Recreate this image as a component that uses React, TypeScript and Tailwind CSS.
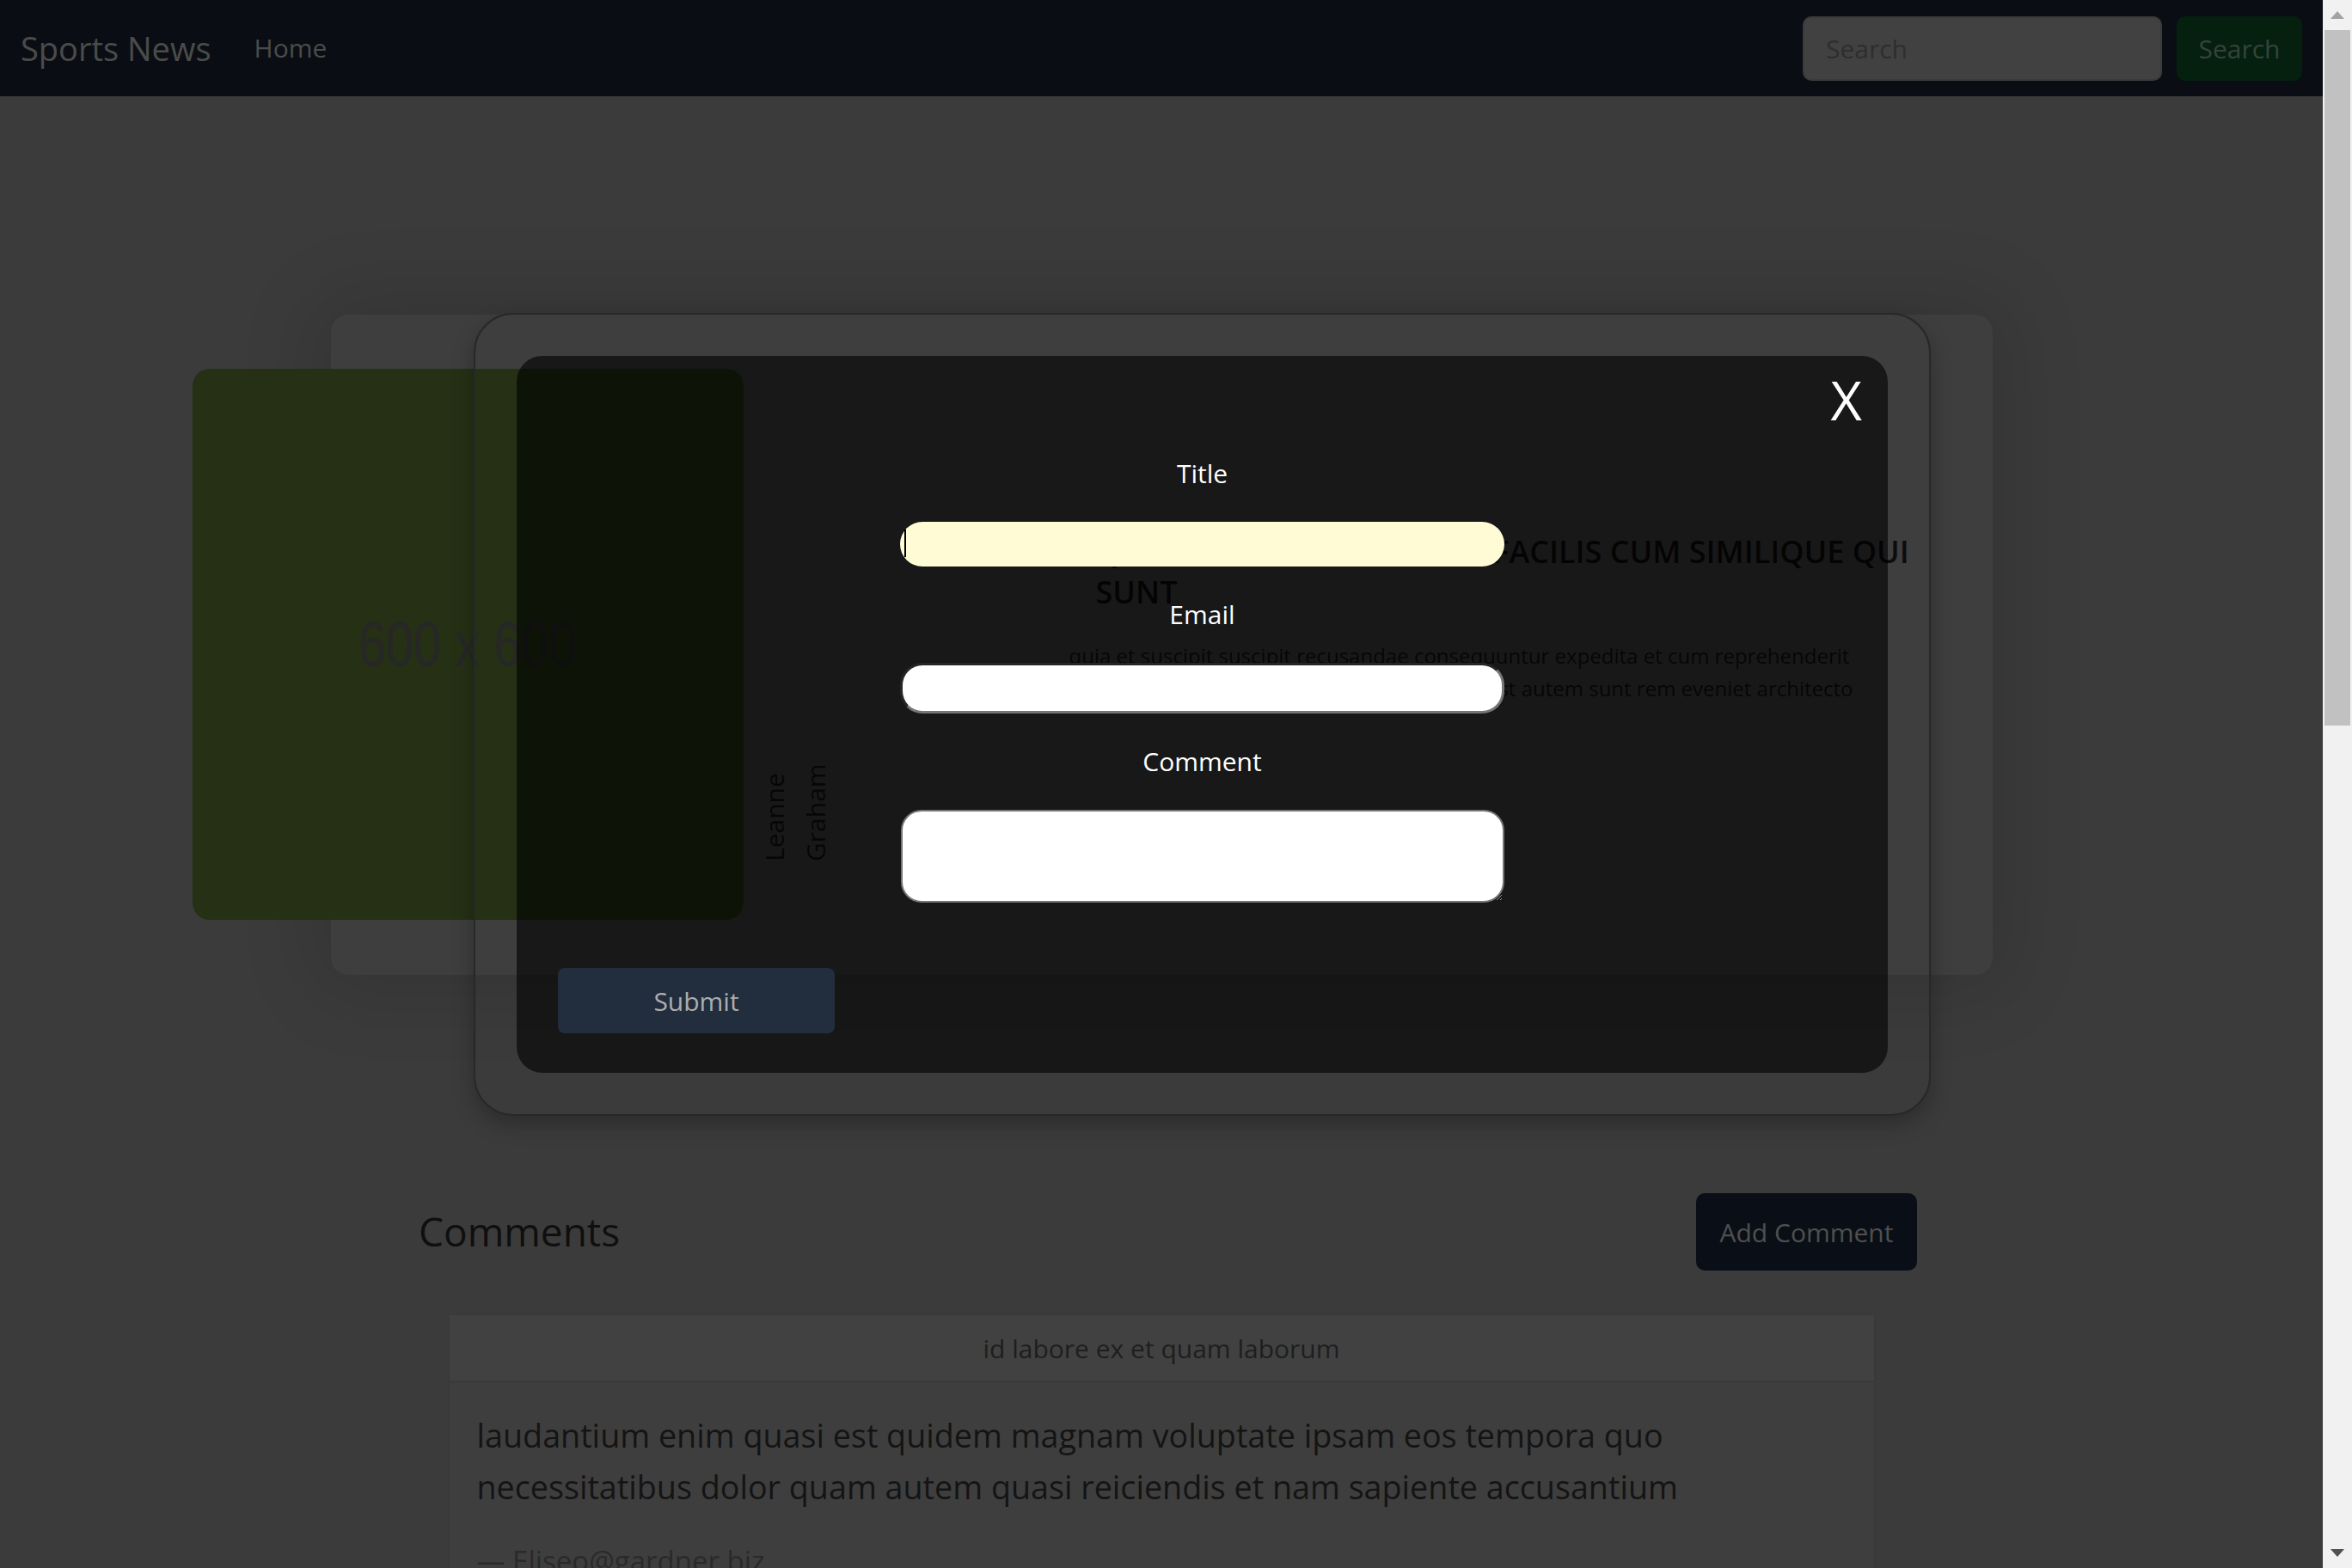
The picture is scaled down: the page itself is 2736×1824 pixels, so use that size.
import { useState } from 'react'

const COMMENT = {
  name: 'id labore ex et quam laborum',
  email: 'Eliseo@gardner.biz',
  body: 'laudantium enim quasi est quidem magnam voluptate ipsam eos tempora quo necessitatibus dolor quam autem quasi reiciendis et nam sapiente accusantium',
}

function Navbar() {
  return (
    <nav className="flex h-[112px] items-center bg-[#0a0e14] px-[24px]">
      <a href="#" className="text-[38px] leading-[56px] text-[#4b4b4b]">
        Sports News
      </a>
      <a href="#" className="ml-[50px] text-[30px] leading-[48px] text-[#4b4b4b]">
        Home
      </a>
      <form className="ml-auto flex gap-[17px]" onSubmit={(e) => e.preventDefault()}>
        <input
          placeholder="Search"
          className="h-[75px] w-[418px] rounded-[10px] border-2 border-[#3a3a3a] bg-[#414141] px-[25px] text-[30px] text-[#2e2e2e] outline-none placeholder:text-[#2e2e2e]"
        />
        <button className="h-[75px] w-[146px] rounded-[10px] bg-[#05200f] text-[30px] text-[#34443a]">
          Search
        </button>
      </form>
    </nav>
  )
}

function ArticleCard() {
  return (
    <section className="mx-auto mt-[254px] flex h-[768px] w-[1933px] rounded-[20px] bg-[#3e3e3e] shadow-[0_0_90px_20px_rgba(0,0,0,0.12)]">
      <div className="-ml-[161px] mt-[63px] flex h-[641px] w-[641px] shrink-0 items-center justify-center rounded-[20px] bg-[#253015]">
        <span className="scale-x-[0.77] font-['Liberation_Sans',sans-serif] text-[75px] text-[#272727]">
          600 x 600
        </span>
      </div>

      <div className="ml-[12px] mt-[516px] h-[120px] rotate-180 text-[30px] leading-[48px] text-[#111111] [writing-mode:vertical-rl]">
        Leanne Graham
      </div>

      <div className="ml-[271px] mt-[252px] flex flex-col">
        <h5 className="ml-[31px] whitespace-nowrap text-[36px] font-semibold uppercase leading-[47px] text-[#0c0c0c]">
          qui est eum et magnam facilis cum similique qui
          <br />
          sunt
        </h5>
        <p className="mt-[32px] whitespace-nowrap text-[24px] leading-[38px] text-[#101010]">
          quia et suscipit suscipit recusandae consequuntur expedita et cum reprehenderit
          <br />
          molestiae ut ut quas totam nostrum rerum est autem sunt rem eveniet architecto
        </p>
      </div>
    </section>
  )
}

function Comments() {
  return (
    <>
      <div className="ml-[487px] mt-[254px] flex h-[90px] w-[1743px] items-center justify-between">
        <h4 className="text-[46px] font-medium leading-[1.2] text-[#0f0f0f]">Comments</h4>
        <button className="h-[90px] w-[257px] rounded-[10px] bg-[#0a0f17] text-[30px] text-[#4f4f4f]">
          Add Comment
        </button>
      </div>

      <div className="mx-auto mt-[50px] w-[1661px] rounded-[12px] border-2 border-[#393939] bg-[#3e3e3e]">
        <div className="flex h-[78px] items-center justify-center border-b-2 border-[#393939] bg-[#414141] text-[30px] text-[#1e1e1e]">
          {COMMENT.name}
        </div>
        <div className="p-[32px]">
          <blockquote>
            <p className="text-[37.7px] leading-[60px] text-[#141414]">{COMMENT.body}</p>
            <footer className="mt-[32px] text-[33px] leading-[48px] text-[#2a2a2a]">
              — {COMMENT.email}
            </footer>
          </blockquote>
        </div>
      </div>
    </>
  )
}

function CommentModal() {
  const [title, setTitle] = useState('')
  const [email, setEmail] = useState('')
  const [comment, setComment] = useState('')

  return (
    <div className="absolute left-[551px] top-[364px] h-[934px] w-[1695px] rounded-[46px] border-2 border-[#282828] p-[48px] shadow-[0_10px_24px_rgba(0,0,0,0.25)]">
      <div className="relative h-full rounded-[30px] bg-black/60 pt-[113px]">
        <button className="absolute right-[30px] top-[3px] text-[63px] leading-[96px] text-white">
          X
        </button>

        <form className="flex flex-col" onSubmit={(e) => e.preventDefault()}>
          <div className="flex flex-col items-center gap-[32px]">
            <label className="text-[30px] leading-[48px] text-white">Title</label>
            <div className="relative h-[52px] w-[703px]">
              <input
                value={title}
                onChange={(e) => setTitle(e.target.value)}
                className="h-full w-full rounded-[26px] bg-[#fffbd5] px-[6px] outline-none"
              />
              <span className="absolute left-[5px] top-[9px] h-[32px] w-[2px] bg-black" />
            </div>

            <label className="text-[30px] leading-[48px] text-white">Email</label>
            <input
              type="email"
              value={email}
              onChange={(e) => setEmail(e.target.value)}
              className="h-[59px] w-[703px] rounded-[26px] border-[3px] border-[#767676] border-t-[#262626] border-l-[#262626] bg-white outline-none"
            />

            <label className="text-[30px] leading-[48px] text-white">Comment</label>
            <textarea
              value={comment}
              onChange={(e) => setComment(e.target.value)}
              className="h-[108px] w-[702px] rounded-[24px] border-2 border-[#767676] bg-white outline-none"
            />
          </div>

          <button className="ml-[48px] mt-[76px] h-[76px] w-[322px] self-start rounded-[8px] bg-[#222e3d] text-[30px] text-[#adadad]">
            Submit
          </button>
        </form>
      </div>
    </div>
  )
}

function Scrollbar() {
  return (
    <div className="flex w-[34px] shrink-0 flex-col bg-[#f1f1f1]">
      <div className="flex h-[35px] items-center justify-center">
        <svg width="16" height="9" viewBox="0 0 16 9">
          <path d="M8 0L16 9H0z" fill="#a3a3a3" />
        </svg>
      </div>
      <div className="mx-[2px] h-[809px] bg-[#c1c1c1]" />
      <div className="mt-auto flex h-[35px] items-center justify-center">
        <svg width="16" height="9" viewBox="0 0 16 9">
          <path d="M0 0H16L8 9z" fill="#505050" />
        </svg>
      </div>
    </div>
  )
}

export default function App() {
  return (
    <div className="flex h-screen w-full overflow-hidden bg-[#3b3b3b] font-['Open_Sans',sans-serif]">
      <div className="relative flex-1 overflow-hidden">
        <Navbar />
        <ArticleCard />
        <Comments />
        <CommentModal />
      </div>
      <Scrollbar />
    </div>
  )
}
